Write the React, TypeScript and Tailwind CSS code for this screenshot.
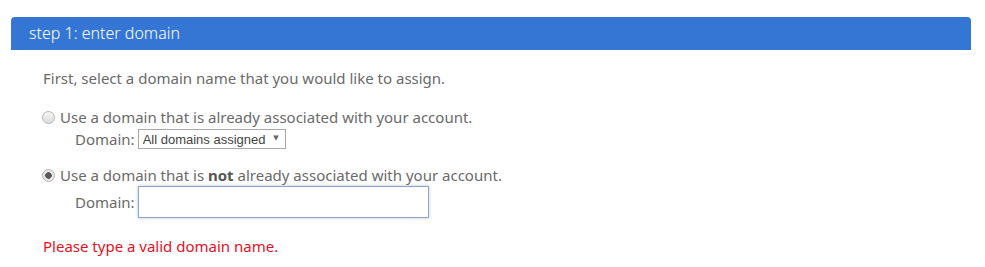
import { useState } from 'react';

function App() {
  const [choice, setChoice] = useState<'existing' | 'new'>('new');
  const [domain, setDomain] = useState('');

  const radioClass =
    "mr-[5px] ml-[-1px] h-[13px] w-[13px] appearance-none rounded-full border border-[#b5b5b5] bg-[linear-gradient(#f4f4f4,#dcdcdc)] checked:bg-[radial-gradient(circle,#5a5a5a_0,#5a5a5a_3px,#e6e6e6_3.5px)]";

  return (
    <div className="min-h-[267px] bg-white pt-[17px] pl-[11px] pr-[14px] text-[15px] text-[#6a6a6a] [font-family:'Noto_Sans',sans-serif]">
      <div className="h-[33px] rounded-t-[4px] bg-[#3576d4] pl-[18px] text-[16px] font-light leading-[33px] text-white">
        step 1: enter domain
      </div>

      <div className="pl-[32px]">
        <p className="mt-[18px] leading-[20px]">First, select a domain name that you would like to assign.</p>

        <label className="mt-[19px] flex items-center leading-[20px]">
          <input
            type="radio"
            name="domainChoice"
            checked={choice === 'existing'}
            onChange={() => setChoice('existing')}
            className={radioClass}
          />
          Use a domain that is already associated with your account.
        </label>
        <div className="mt-[1px] flex items-center pl-[32px] leading-[20px]">
          <span className="mr-[3px]">Domain:</span>
          <div className="relative">
            <select className="h-[20px] w-[148px] appearance-none border border-[#a9a9a9] bg-white pl-[4px] text-[13px] text-[#444] [font-family:'Liberation_Sans',sans-serif]">
              <option>All domains assigned</option>
            </select>
            <span className="pointer-events-none absolute right-[7px] top-[4px] text-[7px] leading-[12px] text-[#666] [font-family:'DejaVu_Sans',sans-serif]">
              ▼
            </span>
          </div>
        </div>

        <label className="mt-[16px] flex items-center leading-[20px]">
          <input
            type="radio"
            name="domainChoice"
            checked={choice === 'new'}
            onChange={() => setChoice('new')}
            className={radioClass}
          />
          <span>
            Use a domain that is <b className="text-[#555]">not</b> already associated with your account.
          </span>
        </label>
        <div className="mt-[1px] flex items-center pl-[32px]">
          <span className="mr-[3px]">Domain:</span>
          <input
            type="text"
            autoFocus
            value={domain}
            onChange={(e) => setDomain(e.target.value)}
            className="h-[32px] w-[291px] border border-[#8fa7c4] px-[7px] text-[14px] text-[#444] shadow-[0_0_3px_rgba(90,120,170,0.45)] outline-none"
          />
        </div>

        <p className="mt-[18px] leading-[20px] text-[#e8101e]">Please type a valid domain name.</p>
      </div>
    </div>
  );
}

export default App;
